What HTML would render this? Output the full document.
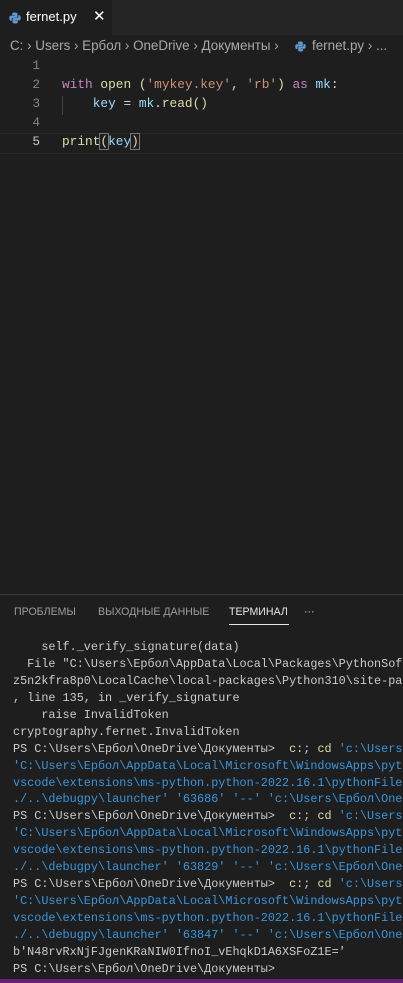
<!DOCTYPE html>
<html><head><meta charset="utf-8"><style>
html,body{margin:0;width:403px;height:983px;overflow:hidden}
body{background:#1e1e1e;position:relative;font-family:"Liberation Sans",sans-serif}
.tabbar{position:absolute;top:0;left:0;width:403px;height:35px;background:#252526}
.tab{position:absolute;left:0;top:0;width:112px;height:35px;background:#1e1e1e;color:#fff;font-size:13px}
.mono{font-family:"Liberation Mono","DejaVu Sans Mono",monospace}
.bc{position:absolute;top:38px;color:#a9a9a9;font-size:13.4px;white-space:pre}
.ln{position:absolute;left:0;width:40px;text-align:right;color:#858585;font-size:12.8px}
.code{position:absolute;left:62px;font-size:12.8px;white-space:pre;color:#d4d4d4}
.term{position:absolute;left:13px;top:639px;width:390px;overflow:hidden;font-size:11.8px;color:#cccccc}
.term div{height:16.95px;line-height:16.95px;white-space:pre;overflow:hidden}
.pt{position:absolute;top:606px;font-size:10.6px;color:#9d9d9d;white-space:pre}
.y{color:#dcdcaa}.s{color:#ce9178}.b{color:#9cdcfe}.k{color:#c586c0}.f{color:#dcdcaa}.t{color:#3a96dd}
</style></head><body>
<div class="tabbar"><div class="tab">
<svg style="position:absolute;left:9px;top:12px" width="12" height="12" viewBox="0 0 12 12"><path d="M6 0.5C3 0.5 3.2 1.8 3.2 1.8V3.2H6.1V3.6H2C2 3.6 0.3 3.4 0.3 6.1 0.3 8.8 1.8 8.7 1.8 8.7H2.7V7.4C2.7 7.4 2.6 5.9 4.2 5.9H7C7 5.9 8.5 5.9 8.5 4.5V2C8.5 2 8.7 0.5 6 0.5Z" fill="#5f9bd0"/><path d="M6 11.5C9 11.5 8.8 10.2 8.8 10.2V8.8H5.9V8.4H10C10 8.4 11.7 8.6 11.7 5.9 11.7 3.2 10.2 3.3 10.2 3.3H9.3V4.6C9.3 4.6 9.4 6.1 7.8 6.1H5C5 6.1 3.5 6.1 3.5 7.5V10C3.5 10 3.3 11.5 6 11.5Z" fill="#5f9bd0"/></svg>
<span style="position:absolute;left:26px;top:9px">fernet.py</span>
<span style="position:absolute;left:93px;top:7px;font-size:15px">✕</span></div></div>
<div class="bc" style="left:10px">C: › Users › Ербол › OneDrive › Документы ›</div>
<div class="bc" style="left:312px">fernet.py › ...</div>
<svg style="position:absolute;left:295px;top:41px" width="11" height="11" viewBox="0 0 12 12"><path d="M6 0.5C3 0.5 3.2 1.8 3.2 1.8V3.2H6.1V3.6H2C2 3.6 0.3 3.4 0.3 6.1 0.3 8.8 1.8 8.7 1.8 8.7H2.7V7.4C2.7 7.4 2.6 5.9 4.2 5.9H7C7 5.9 8.5 5.9 8.5 4.5V2C8.5 2 8.7 0.5 6 0.5Z" fill="#5f9bd0"/><path d="M6 11.5C9 11.5 8.8 10.2 8.8 10.2V8.8H5.9V8.4H10C10 8.4 11.7 8.6 11.7 5.9 11.7 3.2 10.2 3.3 10.2 3.3H9.3V4.6C9.3 4.6 9.4 6.1 7.8 6.1H5C5 6.1 3.5 6.1 3.5 7.5V10C3.5 10 3.3 11.5 6 11.5Z" fill="#5f9bd0"/></svg>
<div style="position:absolute;left:0;top:133px;width:403px;height:19px;border-top:1px solid #282828;border-bottom:1px solid #282828"></div>
<div class="ln mono" style="top:58px">1</div>
<div class="ln mono" style="top:77px">2</div>
<div class="ln mono" style="top:96px">3</div>
<div class="ln mono" style="top:115px">4</div>
<div class="ln mono" style="top:134px;color:#c6c6c6">5</div>
<div style="position:absolute;left:62px;top:96px;width:1px;height:19px;background:#404040"></div>
<div class="code mono" style="top:77px"><span class="k">with</span> <span class="f">open</span> <span class="y">(</span><span class="s">'mykey.key'</span>, <span class="s">'rb'</span><span class="y">)</span> <span class="k">as</span> <span class="b">mk</span>:</div>
<div class="code mono" style="top:96px">    <span class="b">key</span> = <span class="b">mk</span>.<span class="f">read</span><span class="y">()</span></div>
<div class="code mono" style="top:134px"><span class="f">print</span><span class="y" style="outline:1px solid #777">(</span><span class="b">key</span><span class="y" style="outline:1px solid #777">)</span></div>
<div style="position:absolute;left:0;top:594px;width:403px;height:1px;background:#3c3c3c"></div>
<div class="pt" style="left:14px">ПРОБЛЕМЫ</div>
<div class="pt" style="left:98px">ВЫХОДНЫЕ ДАННЫЕ</div>
<div class="pt" style="left:229px;color:#e7e7e7">ТЕРМИНАЛ</div>
<div class="pt" style="left:304px;color:#ccc">···</div>
<div style="position:absolute;left:229px;top:624px;width:60px;height:1px;background:#e7e7e7"></div>
<div class="term mono">
<div>    self._verify_signature(data)</div>
<div>  File "C:\Users\Ербол\AppData\Local\Packages\PythonSoftwareFoundation</div>
<div>z5n2kfra8p0\LocalCache\local-packages\Python310\site-packages</div>
<div>, line 135, in _verify_signature</div>
<div>    raise InvalidToken</div>
<div>cryptography.fernet.InvalidToken</div>
<div>PS C:\Users\Ербол\OneDrive\Документы>  <span class="y">c:</span>; <span class="y">cd</span> <span class="t">'c:\Users\Ербол'</span></div>
<div class="t">'C:\Users\Ербол\AppData\Local\Microsoft\WindowsApps\python'</div>
<div class="t">vscode\extensions\ms-python.python-2022.16.1\pythonFiles\lib</div>
<div class="t">./..\debugpy\launcher' '63686' '--' 'c:\Users\Ербол\OneDrive'</div>
<div>PS C:\Users\Ербол\OneDrive\Документы>  <span class="y">c:</span>; <span class="y">cd</span> <span class="t">'c:\Users\Ербол'</span></div>
<div class="t">'C:\Users\Ербол\AppData\Local\Microsoft\WindowsApps\python'</div>
<div class="t">vscode\extensions\ms-python.python-2022.16.1\pythonFiles\lib</div>
<div class="t">./..\debugpy\launcher' '63829' '--' 'c:\Users\Ербол\OneDrive'</div>
<div>PS C:\Users\Ербол\OneDrive\Документы>  <span class="y">c:</span>; <span class="y">cd</span> <span class="t">'c:\Users\Ербол'</span></div>
<div class="t">'C:\Users\Ербол\AppData\Local\Microsoft\WindowsApps\python'</div>
<div class="t">vscode\extensions\ms-python.python-2022.16.1\pythonFiles\lib</div>
<div class="t">./..\debugpy\launcher' '63847' '--' 'c:\Users\Ербол\OneDrive'</div>
<div>b'N48rvRxNjFJgenKRaNIW0IfnoI_vEhqkD1A6XSFoZ1E='</div>
<div>PS C:\Users\Ербол\OneDrive\Документы></div>
</div>
<div style="position:absolute;left:0;top:979px;width:403px;height:4px;background:#68217a"></div>
</body></html>
